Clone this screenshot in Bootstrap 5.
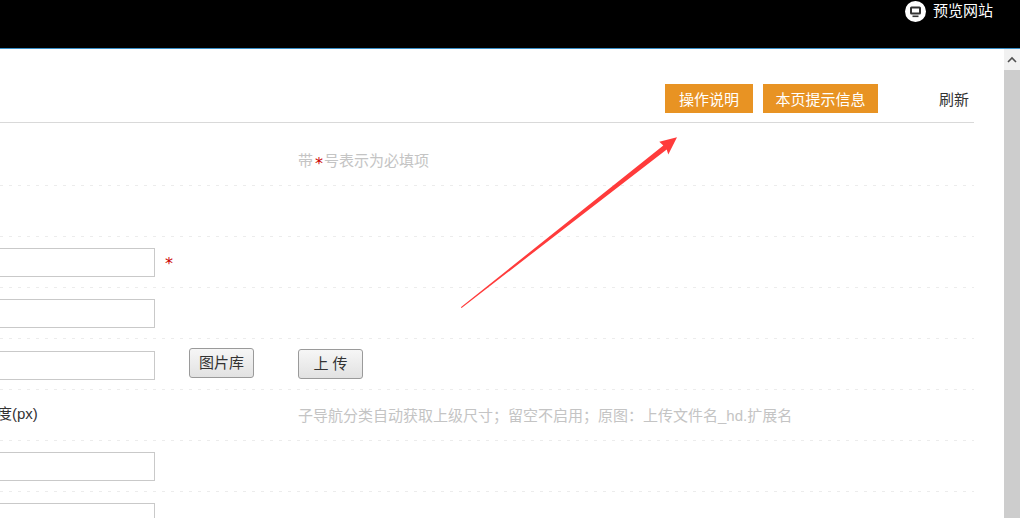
<!DOCTYPE html>
<html lang="zh"><head><meta charset="utf-8">
<link rel="stylesheet" href="https://cdn.jsdelivr.net/npm/bootstrap@5.3.0/dist/css/bootstrap.min.css">
<style>
html,body{height:100%;overflow:hidden}
body{font-family:"Liberation Sans","Noto Sans CJK SC",sans-serif;font-size:15px;color:#333;background:#fff}
.topbar{height:49px;background:#000;border-bottom:1px solid #3a8fc7;color:#fff}
.preview-link{padding:0 27px 0 0;height:22px;gap:7px}
.workarea{height:469px;overflow:hidden}
.pane{width:1004px;position:relative;overflow:hidden}
.toolbar{width:974px;height:74px;border-bottom:1px solid #d9d9d9;padding:35px 5px 0 0}
.tip-btn{background:#e89323;color:#fff;height:29px;line-height:31px;padding:0 14px;font-size:15px;border:0;border-radius:0;white-space:nowrap}
.tip-btn+.tip-btn{margin-left:10px;padding:0 12.5px}
.refresh{margin-left:61px;line-height:31px;color:#333;text-decoration:none}
.fline{width:974px;height:51px;flex:none;background:repeating-linear-gradient(90deg,#ececec 0 3px,transparent 3px 9px) left bottom/100% 1px no-repeat;padding-top:11px}
.fline.first{height:63px;padding-top:26px}
.ctrl{width:298px;flex:none;white-space:nowrap}
.field{width:175px;height:29px;margin-left:-20px;border:1px solid #c9c9c9;background:#fff;flex:none}
.req{color:#c00;font-family:"DejaVu Sans",sans-serif;font-size:16px;line-height:1}
.hint .req{margin:0 1px 0 2px;vertical-align:-3px}
.star-gap{margin:3px 0 0 10px}
.hint{color:#c4c4c4;line-height:24px}
.fline.note-row{padding-top:14px}
.text-label{display:block;margin:-1px 0 0 -3px}
.legacy-btn{height:30px;width:65px;padding:0;border:1px solid #9a9a9a;border-radius:3px;font-size:15px;color:#333;background:linear-gradient(#f6f6f6,#e2e2e2);line-height:28px;flex:none}
.lib-btn{margin-left:34px;margin-top:-3px}
.up-btn{margin-top:-2px}
.fline.row-lift{padding-top:12px}
.shot-arrow{position:absolute;left:455px;top:85px;width:230px;height:180px}
.track{width:16px;background:#cdcdcd;flex:none}
.track-up{height:21px;background:#f1f1f1}
</style></head><body>
<header class="topbar d-flex justify-content-end align-items-start">
 <div class="preview-link d-flex align-items-center">
  <svg width="21" height="21" viewBox="0 0 21 21" aria-hidden="true"><circle cx="10.5" cy="10.5" r="10.5" fill="#fff"/><rect x="5" y="5.5" width="11" height="8" rx="1.5" fill="#333"/><rect x="7" y="7.5" width="7" height="4" fill="#fff"/><rect x="7.5" y="14.5" width="6" height="1.6" fill="#333"/></svg>
  <span>预览网站</span>
 </div>
</header>
<div class="workarea d-flex">
 <main class="pane">
  <div class="toolbar d-flex justify-content-end align-items-start">
   <button class="btn tip-btn">操作说明</button><button class="btn tip-btn">本页提示信息</button>
   <a class="refresh" href="#">刷新</a>
  </div>
  <div class="fline first d-flex align-items-start"><div class="ctrl"></div><div class="hint">带<span class="req">*</span>号表示为必填项</div></div>
  <div class="fline"></div>
  <div class="fline d-flex align-items-start"><div class="ctrl d-flex align-items-center"><div class="field"></div><span class="req star-gap">*</span></div></div>
  <div class="fline d-flex align-items-start"><div class="ctrl d-flex"><div class="field"></div></div></div>
  <div class="fline d-flex align-items-start row-lift"><div class="ctrl d-flex align-items-start"><div class="field"></div><button class="legacy-btn lib-btn">图片库</button></div><button class="legacy-btn up-btn">上 传</button></div>
  <div class="fline d-flex align-items-start note-row"><div class="ctrl"><span class="text-label">度(px)</span></div><div class="hint">子导航分类自动获取上级尺寸；留空不启用；原图：上传文件名_hd.扩展名</div></div>
  <div class="fline d-flex align-items-start"><div class="ctrl d-flex"><div class="field"></div></div></div>
  <div class="fline d-flex align-items-start"><div class="ctrl d-flex"><div class="field"></div></div></div>
  <svg class="shot-arrow" viewBox="455 134 230 180" aria-hidden="true"><path d="M460.8 307.2 L461.6 308 L666.7 149.5 L668.3 154.5 L677 137.3 L659.3 141.7 L663.3 145.5 Z" fill="#ff3b3b"/></svg>
 </main>
 <aside class="track"><div class="track-up d-flex align-items-center justify-content-center"><svg width="10" height="7" viewBox="0 0 10 7"><path d="M1 6 L5 2 L9 6" fill="none" stroke="#505050" stroke-width="1.6"/></svg></div></aside>
</div>
<script src="https://cdn.jsdelivr.net/npm/bootstrap@5.3.0/dist/js/bootstrap.bundle.min.js"></script>
</body></html>
